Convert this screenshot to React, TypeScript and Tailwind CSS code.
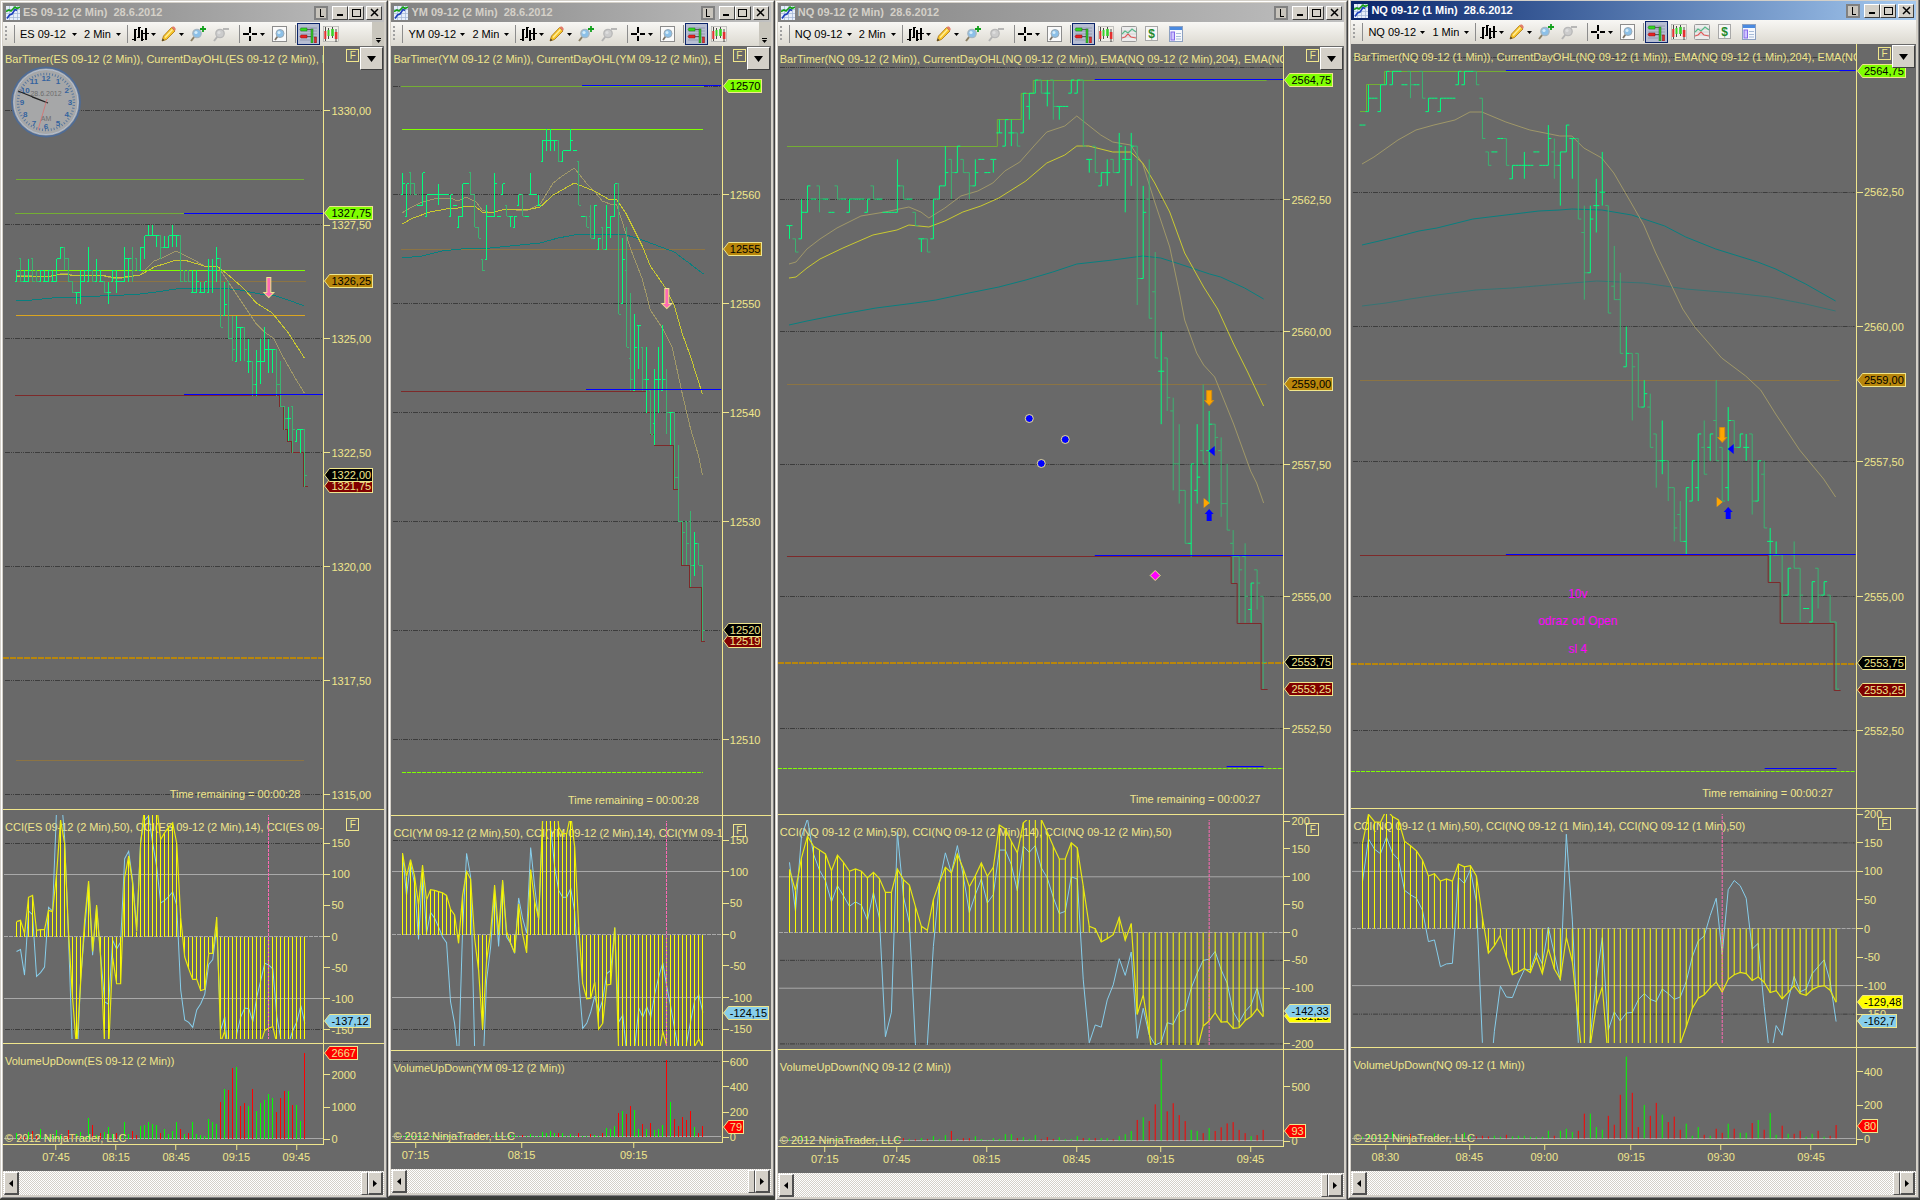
import type { ReactNode } from "react";

type Tag = { text: string; y: number; tone: keyof typeof TAG_TONES };
type Line = { pts: string; color: string; w?: number; dash?: string };
type Tick = [string, number];

type ChartProps = {
  symbol: string;
  period: string;
  active?: boolean;
  frame: string;
  axis: string;
  cciHeight: string;
  volHeight: string;
  extraTools?: boolean;
  x0: number;
  x1: number;
  top: number;
  sep1: number;
  sep2: number;
  sep3: number;
  firstBar: number;
  step: number;
  priceZero: number;
  priceStep: number;
  bars: string;
  grid: number[];
  lines: Line[];
  priceTicks: Tick[];
  priceTags: Tag[];
  remaining: string;
  remainingPad: string;
  cciZero: number;
  cciUnit: number;
  cci: number[];
  fast: number[];
  cciTicks: number[];
  cciGrid: number[];
  cciTags: Tag[];
  marker: number;
  fullCciTitle?: boolean;
  volZero: number;
  volUnit: number;
  vol: number[];
  volTicks: number[];
  volGrid?: number[];
  volTag: Tag;
  times: Tick[];
  drawings: ReactNode;
  overlay?: ReactNode;
};

const TAG_TONES = {
  lime: { fill: "#7fff00", box: "bg-[#7fff00] text-black" },
  gold: { fill: "#b8860b", box: "bg-[#b8860b] text-black" },
  black: { fill: "#000000", box: "bg-black text-[#f0e68c]" },
  maroon: { fill: "#800000", box: "bg-[#800000] text-[#f0e68c]" },
  sky: { fill: "#87ceeb", box: "bg-[#87ceeb] text-black" },
  yellow: { fill: "#ffff00", box: "bg-[#ffff00] text-black" },
  red: { fill: "#ff0000", box: "bg-[#ff0000] text-[#f0e68c]" },
};

const KHAKI = "#a09868";
const YELLOW = "#caca30";
const TEAL = "#087f7f";
const OLIVE = "#74ae34";
const LIME = "#7fff00";
const BLUE = "#0000ff";
const MAROON = "#7d2a2a";
const BROWN = "#8c7444";
const GOLD = "#b8860b";

// ---------- toolbar ----------

function Caret() {
  return (
    <svg width="5" height="3" viewBox="0 0 5 3" className="shrink-0">
      <path d="M0 0h5L2.5 3z" fill="#000" />
    </svg>
  );
}

function Divider() {
  return <span className="h-[18px] w-px shrink-0 bg-[#8c8c8c]" />;
}

function ToolButton({ label, wide, children }: { label: string; wide?: boolean; children: ReactNode }) {
  return (
    <button aria-label={label} className={wide ? "flex h-5 w-[21px] shrink-0 items-center gap-[2px]" : "flex h-5 w-4 shrink-0 items-center"}>
      {children}
    </button>
  );
}

function AppIcon() {
  return (
    <svg width="14" height="14" viewBox="0 0 14 14" className="shrink-0">
      <rect width="14" height="14" fill="#e6eefa" />
      <path d="M0 3.5h14M0 7.5h14M0 11.5h14M3.5 0v14M7.5 0v14M11.5 0v14" stroke="#9fb4d4" strokeWidth="0.7" />
      <path d="M0 5.500l3-1.500 2 1 4-4 2 1.500 3-1.500" fill="none" stroke="#15a015" strokeWidth="1.600" />
      <path d="M1 12.500l2.500-3.500 2.500-1 3-4.500 2 1" fill="none" stroke="#1c3fbc" strokeWidth="1.600" />
    </svg>
  );
}

function BarsIcon() {
  return (
    <svg width="17" height="16" viewBox="0 0 17 16" className="shrink-0" shapeRendering="crispEdges">
      <path d="M3 3v12M7 1v11M10 4v11M14 2v12" stroke="#000" strokeWidth="2" fill="none" />
      <path d="M0 13.500h3M3 3.500h2M5 11.500h2M7 1.500h2M10 13.500h2M11 7.500h6" stroke="#000" fill="none" />
    </svg>
  );
}

function PencilIcon() {
  return (
    <svg width="16" height="16" viewBox="0 0 16 16" className="shrink-0">
      <path d="M1 15l1.500-5 8-8.500 3.500 3.500-8.500 8.500z" fill="#f7c52b" stroke="#a87412" strokeWidth="0.8" />
      <path d="M4 11.500l7.500-8" stroke="#ffef9a" strokeWidth="1.400" />
      <path d="M10.500 1.500l1.500-1.200q1.800 0 2.800 2.800L14 5z" fill="#e37d6a" />
      <path d="M1 15l.8-2.500 1.600 1.700z" fill="#333" />
    </svg>
  );
}

function ZoomIcon({ out }: { out?: boolean }) {
  return (
    <svg width="16" height="16" viewBox="0 0 16 16" className="shrink-0">
      <path d="M4.500 10.500L1 15" stroke={out ? "#b4b4b4" : "#8c8064"} strokeWidth="2" />
      <circle cx="7" cy="7.500" r="4.200" fill={out ? "#cccccc" : "#8cc0e8"} stroke={out ? "#b8b8b8" : "#a6b6c2"} strokeWidth="1.300" />
      <circle cx="6" cy="6.500" r="1.600" fill={out ? "#dedede" : "#d4ecfa"} />
      {out ? <path d="M10 3h6" stroke="#b0b0b0" strokeWidth="1.800" /> : <path d="M10 3h6M13 0v6" stroke="#12a01c" strokeWidth="1.800" />}
    </svg>
  );
}

function CrossIcon() {
  return (
    <svg width="15" height="15" viewBox="0 0 15 15" className="shrink-0" shapeRendering="crispEdges">
      <path d="M0 7h6M9 7h5M7 0v6M7 9v5" stroke="#000" strokeWidth="2" />
    </svg>
  );
}

function PageZoomIcon() {
  return (
    <svg width="15" height="16" viewBox="0 0 15 16" className="shrink-0">
      <rect x="0.500" y="0.500" width="14" height="15" fill="#fafafa" stroke="#8c8c8c" />
      <path d="M5.500 10.500L3 14" stroke="#7c7468" strokeWidth="1.800" />
      <circle cx="8" cy="7.500" r="4" fill="#8cc0e8" stroke="#9aa9b4" />
      <circle cx="7" cy="6.500" r="1.500" fill="#d4ecfa" />
    </svg>
  );
}

function TraderIcon() {
  return (
    <svg width="19" height="17" viewBox="0 0 19 17">
      <path d="M1 2h17M1 5h17M1 8h17M1 11h17M1 14h10" stroke="#8a93a8" strokeWidth="0.800" />
      <path d="M2 2h6v3H2l-1-1.500z" fill="#33d81f" stroke="#1b7a14" strokeWidth="0.500" />
      <path d="M2 9h6v3H2l-1-1.500z" fill="#e62222" stroke="#8c1010" strokeWidth="0.500" />
      <path d="M8 3.500h5M8 10.500h4" stroke="#444" strokeWidth="0.800" />
      <rect x="12" y="3" width="2" height="14" fill="#35c828" stroke="#1c6c18" strokeWidth="0.500" />
      <rect x="15.500" y="11" width="2" height="6" fill="#e02d2d" stroke="#801616" strokeWidth="0.500" />
    </svg>
  );
}

function CandlesIcon() {
  return (
    <svg width="16" height="16" viewBox="0 0 16 16">
      <rect x="0.500" y="0.500" width="15" height="15" fill="#f1efe8" stroke="#a0a0a0" strokeWidth="0.600" />
      <path d="M2.500 1v14M5.500 2v11M9.500 1v11M13 3v13" stroke="#222" strokeWidth="0.800" />
      <rect x="1.300" y="5" width="2" height="8" fill="#e33030" />
      <rect x="4.500" y="4" width="2" height="6" fill="#36d22a" />
      <rect x="8.200" y="3" width="2.600" height="7" fill="#36d22a" />
      <rect x="11.800" y="6" width="2.600" height="7" fill="#e33030" />
    </svg>
  );
}

function IndicatorIcon() {
  return (
    <svg width="16" height="16" viewBox="0 0 16 16">
      <rect x="0.500" y="0.500" width="15" height="15" rx="1" fill="#ececec" stroke="#9a9a9a" />
      <path d="M1 5h14M1 8h14M1 11h14" stroke="#c8c8c8" strokeWidth="0.700" />
      <path d="M1 8l3-3 3 2 4-4 4 3" fill="none" stroke="#58b888" strokeWidth="1.200" />
      <path d="M1 12l3-1 3-3 3 3 5 1" fill="none" stroke="#e05a5a" strokeWidth="1.200" />
    </svg>
  );
}

function StrategyIcon() {
  return (
    <svg width="13" height="16" viewBox="0 0 13 16">
      <rect x="0.500" y="0.500" width="12" height="14" fill="#f6f6f6" stroke="#a8a8a8" />
      <text x="6.500" y="12" textAnchor="middle" className="font-['Liberation_Sans'] text-[12px] font-bold" fill="#1f8a2c">$</text>
    </svg>
  );
}

function PropertiesIcon() {
  return (
    <svg width="14" height="16" viewBox="0 0 14 16">
      <rect x="0.500" y="0.500" width="13" height="15" fill="#f6f8fc" stroke="#8ca0c0" />
      <path d="M1 2.500h12" stroke="#4a8ae0" strokeWidth="3" />
      <rect x="2" y="6" width="3.500" height="8" fill="#cfc4ff" stroke="#8468e8" />
      <path d="M7 7.500h5M7 10.500h5M7 13h5" stroke="#a8bcd8" />
    </svg>
  );
}

function TitleButton({ label, children, flat }: { label: string; children: ReactNode; flat?: boolean }) {
  return (
    <button
      aria-label={label}
      className={
        flat
          ? "flex h-[14px] w-[14px] items-center justify-center border-2 border-[#808080] bg-[#c8c4bc]"
          : "flex h-[14px] w-4 items-center justify-center border border-b-[#404040] border-l-white border-r-[#404040] border-t-white bg-[#d4d0c8]"
      }
    >
      <svg width="9" height="9" viewBox="0 0 9 9" shapeRendering={label === "Close" ? "auto" : "crispEdges"}>
        {children}
      </svg>
    </button>
  );
}

function TitleBar({ name, active }: { name: string; active?: boolean }) {
  return (
    <header
      className={
        active
          ? "flex h-[19px] items-center bg-linear-to-r from-[#0a246a] to-[#a6caf0] pl-[3px] pr-[2px] text-white"
          : "flex h-[19px] items-center bg-linear-to-r from-[#808080] to-[#c0c0c0] pl-[3px] pr-[2px] text-[#d4d0c8]"
      }
    >
      <AppIcon />
      <h2 className="ml-[3px] flex-1 overflow-hidden whitespace-pre pb-[2px] text-[11px] font-bold leading-4">{name}</h2>
      <TitleButton label="Link" flat>
        <path d="M3 1v7h4" stroke="#000" fill="none" />
      </TitleButton>
      <span className="w-1" />
      <TitleButton label="Minimize">
        <path d="M1 7h6" stroke="#000" strokeWidth="2" />
      </TitleButton>
      <TitleButton label="Maximize">
        <path d="M0.500 1.500h8v7h-8zM0 1h9" stroke="#000" fill="none" />
      </TitleButton>
      <span className="w-[2px]" />
      <TitleButton label="Close">
        <path d="M1 1l7 7M8 1L1 8" stroke="#000" strokeWidth="1.500" />
      </TitleButton>
    </header>
  );
}

function Toolbar({ symbol, period, extra }: { symbol: string; period: string; extra?: boolean }) {
  return (
    <div className="flex h-6 items-center overflow-hidden bg-linear-to-b from-[#f8f7f4] to-[#dcd9d0] pl-[2px] text-[11px] text-black">
      <span className="h-4 w-[2px] shrink-0 bg-[repeating-linear-gradient(to_bottom,#a0a0a0_0_2px,transparent_2px_4px)]" />
      <span className="w-[7px] shrink-0" />
      <Divider />
      <label className="ml-[5px] flex w-[57px] shrink-0 items-center justify-between">
        <select aria-label="Instrument" className="h-5 appearance-none bg-transparent">
          <option>{symbol} 09-12</option>
        </select>
        <Caret />
      </label>
      <label className="ml-[7px] flex w-[37px] shrink-0 items-center justify-between">
        <select aria-label="Period" className="h-5 appearance-none bg-transparent">
          <option>{period}</option>
        </select>
        <Caret />
      </label>
      <span className="w-[6px] shrink-0" />
      <Divider />
      <span className="w-[4px] shrink-0" />
      <ToolButton label="Chart style" wide>
        <BarsIcon />
        <Caret />
      </ToolButton>
      <span className="w-[8px] shrink-0" />
      <ToolButton label="Drawing tools" wide>
        <PencilIcon />
        <Caret />
      </ToolButton>
      <span className="w-[8px] shrink-0" />
      <ToolButton label="Zoom in">
        <ZoomIcon />
      </ToolButton>
      <span className="w-[7px] shrink-0" />
      <ToolButton label="Zoom out">
        <ZoomIcon out />
      </ToolButton>
      <span className="w-[10px] shrink-0" />
      <Divider />
      <span className="w-[3px] shrink-0" />
      <ToolButton label="Cursor" wide>
        <CrossIcon />
        <Caret />
      </ToolButton>
      <span className="w-[8px] shrink-0" />
      <ToolButton label="Data box">
        <PageZoomIcon />
      </ToolButton>
      <span className="w-[7px] shrink-0" />
      <Divider />
      <button aria-label="Chart trader" className="ml-px flex h-[22px] w-[23px] shrink-0 items-center justify-center border border-[#0a246a] bg-[#b6bdd2]">
        <TraderIcon />
      </button>
      <span className="w-[3px] shrink-0" />
      <ToolButton label="Data series">
        <CandlesIcon />
      </ToolButton>
      {extra && (
        <div className="ml-[7px] flex shrink-0 gap-[8px]">
          <ToolButton label="Indicators">
            <IndicatorIcon />
          </ToolButton>
          <ToolButton label="Strategies">
            <StrategyIcon />
          </ToolButton>
          <ToolButton label="Properties">
            <PropertiesIcon />
          </ToolButton>
        </div>
      )}
      {!extra && (
        <button aria-label="More tools" className="ml-auto flex h-6 w-3 flex-col items-center justify-end gap-px bg-[#c9c6bd] pb-[3px]">
          <span className="h-px w-[5px] bg-black" />
          <Caret />
        </button>
      )}
    </div>
  );
}

// ---------- axis pieces ----------

function PriceTag({ tag, top }: { tag: Tag; top: string }) {
  const tone = TAG_TONES[tag.tone];
  return (
    <div className="absolute left-0 flex -translate-y-1/2" style={{ top }}>
      <svg width="7" height="14" viewBox="0 0 7 14">
        <path d="M7 0.500H5.500L0.500 7l5 6.500H7" fill={tone.fill} stroke="#f0e68c" />
      </svg>
      <span className={`h-[14px] border-y border-r border-[#f0e68c] pr-px text-[11px] leading-[13px] ${tone.box}`}>{tag.text}</span>
    </div>
  );
}

function Axis({ width, from, to, ticks, tags, open, children }: { width: string; from: number; to: number; ticks: Tick[]; tags: Tag[]; open?: boolean; children?: ReactNode }) {
  const pct = (y: number) => `${((y - from) / (to - from)) * 100}%`;
  return (
    <div className={`relative shrink-0 border-l border-[#f0e68c] ${width} ${open ? "" : "border-b"}`}>
      {ticks.map(([text, y]) => (
        <div key={text} className="absolute left-0 flex -translate-y-1/2 items-center gap-px" style={{ top: pct(y) }}>
          <span className="h-px w-[6px] bg-[#f0e68c]" />
          <span className="h-[14px] leading-[15px]">{text}</span>
        </div>
      ))}
      {tags.map((t) => (
        <PriceTag key={t.text} tag={t} top={pct(t.y)} />
      ))}
      {children}
    </div>
  );
}

function FixedButton({ className }: { className: string }) {
  return (
    <button aria-label="Fixed scale" className={`absolute right-[25px] h-[13px] w-[13px] border border-[#f0e68c] text-center text-[10px] leading-[12px] ${className}`}>
      F
    </button>
  );
}

// ---------- plots ----------

function Grid({ ys, x0, x1 }: { ys: number[]; x0: number; x1: number }) {
  return (
    <>
      {ys.map((y) => (
        <path key={y} d={`M${x0 + 2} ${y}H${x1 - 1}`} stroke="#3c3c3c" strokeDasharray="5 1 1 1 1 1" />
      ))}
    </>
  );
}

function PriceBars({ bars, firstBar, step, zero, unit }: { bars: string; firstBar: number; step: number; zero: number; unit: number }) {
  const arm = step / 2;
  const y = (v: number) => zero - v * unit;
  return (
    <>
      {bars.trim().split(/\s+/).map((bar, i) => {
        const n = bar.split("/").map(Number);
        const [h, l, o, c] = n.length === 1 ? [n[0], n[0], n[0], n[0]] : n;
        const x = firstBar + i * step;
        return (
          <path
            key={i}
            d={`M${x - arm} ${y(o)}H${x}M${x} ${y(h)}V${y(l)}M${x} ${y(c)}H${x + arm}`}
            stroke={c < o ? "#3cb371" : "#00ff7f"}
          />
        );
      })}
    </>
  );
}

function DownArrow({ x, y, h, pink }: { x: number; y: number; h: number; pink?: boolean }) {
  const half = pink ? 2 : 2.5;
  const wing = pink ? 3 : 2;
  const d = `M${x - half} ${y}h${half * 2}v${h - 5}h${wing}l${-half - wing} 5l${-half - wing} -5h${wing}z`;
  return <path d={d} fill={pink ? "#ff69b4" : "#ffa500"} stroke={pink ? "#f0e68c" : "#d08c10"} shapeRendering="auto" />;
}

function UpArrow({ x, y }: { x: number; y: number }) {
  return <path d={`M${x} ${y}l4.500 5h-2v7h-5v-7h-2z`} fill="#0000ff" shapeRendering="auto" />;
}

function Clock() {
  const hours = [12, 1, 2, 3, 4, 5, 6, 7, 8, 9, 10, 11];
  return (
    <svg width="70" height="72" viewBox="-35 -36 70 72" className="absolute left-2 top-[20px]">
      <ellipse rx="34" ry="34.500" fill="#a6a7a8" stroke="#4f6c96" strokeWidth="1.800" />
      <ellipse rx="32" ry="32.500" fill="none" stroke="#b4c0d2" strokeWidth="1" />
      <circle r="28" fill="none" stroke="#5a789e" strokeWidth="2.500" strokeDasharray="1 1.932" />
      {hours.map((h, i) => (
        <text
          key={h}
          x={Math.sin((i * Math.PI) / 6) * 24}
          y={-Math.cos((i * Math.PI) / 6) * 24 + 3}
          textAnchor="middle"
          fill="#33639f"
          className="text-[8px] font-bold"
        >
          {h}
        </text>
      ))}
      <text y="-6" textAnchor="middle" fill="#6d6d6d" className="text-[7px]">28.6.2012</text>
      <text y="19" textAnchor="middle" fill="#6d6d6d" className="text-[7px]">AM</text>
      <path d="M2 1L-28 -11M2 1L-14 -5" stroke="#222" strokeWidth="1.300" />
      <path d="M1 -3L-8 28" stroke="#d87070" strokeWidth="0.800" />
    </svg>
  );
}

function ScrollArrow({ dir }: { dir: "left" | "right" }) {
  return (
    <button
      aria-label={`Scroll ${dir}`}
      className="flex h-[23px] w-[15px] shrink-0 items-center justify-center border border-b-2 border-r-2 border-b-[#505050] border-l-white border-r-[#505050] border-t-white bg-[#d4d0c8]"
    >
      <svg width="4" height="7" viewBox="0 0 4 7">
        <path d={dir === "left" ? "M4 0v7L0 3.500z" : "M0 0v7l4-3.500z"} fill="#000" />
      </svg>
    </button>
  );
}

function ChartWindow(p: ChartProps) {
  const width = p.x1 - p.x0;
  const inst = `${p.symbol} 09-12 (${p.period})`;
  const bx = (i: number) => p.firstBar + i * p.step;
  const cy = (v: number) => p.cciZero - v * p.cciUnit;
  const vy = (v: number) => p.volZero - Math.abs(v) * p.volUnit;
  const series = (vals: number[]) => vals.map((v, i) => `${bx(i)},${cy(v)}`).join(" ");
  const clipId = `cci-${p.x0}`;

  return (
    <section className={`flex min-w-0 flex-col border border-b-[#404040] border-l-[#d4d0c8] border-r-[#404040] border-t-[#d4d0c8] bg-[#d4d0c8] ${p.frame}`}>
      <div className="flex flex-1 flex-col border border-b-[#808080] border-l-white border-r-[#808080] border-t-white pb-[2px] pl-px pr-[2px] pt-px">
        <TitleBar name={`${inst}  28.6.2012`} active={p.active} />
        <Toolbar symbol={p.symbol} period={p.period} extra={p.extraTools} />
        <div className="flex flex-1 flex-col bg-[#696969] text-[11px] text-[#f0e68c]">
          <div className="flex min-h-[400px] flex-1">
            <div className="relative flex min-w-0 flex-1 border-b border-[#f0e68c]">
              <svg
                className="absolute inset-0 h-full w-full"
                viewBox={`${p.x0} ${p.top} ${width} ${p.sep1 - p.top}`}
                preserveAspectRatio="none"
                fill="none"
                shapeRendering="crispEdges"
              >
                <Grid ys={p.grid} x0={p.x0} x1={p.x1} />
                {p.lines.filter((l) => l.color !== BLUE).map((l) => (
                  <polyline key={l.pts} points={l.pts} stroke={l.color} strokeWidth={l.w ?? 1} strokeDasharray={l.dash} />
                ))}
                <PriceBars bars={p.bars} firstBar={p.firstBar} step={p.step} zero={p.priceZero} unit={p.priceStep} />
                {p.lines.filter((l) => l.color === BLUE).map((l) => (
                  <polyline key={l.pts} points={l.pts} stroke={l.color} strokeWidth={l.w ?? 1} />
                ))}
                {p.drawings}
              </svg>
              <p className="absolute left-[2px] right-0 top-[6px] overflow-hidden whitespace-nowrap leading-[14px]">
                {`BarTimer(${inst}), CurrentDayOHL(${inst}), EMA(${inst},204), EMA(${p.symbol}`}
              </p>
              {p.overlay}
              <p className={`absolute right-0 whitespace-nowrap leading-[14px] bottom-[8px] ${p.remainingPad}`}>Time remaining = {p.remaining}</p>
            </div>
            <Axis width={p.axis} from={p.top} to={p.sep1} ticks={p.priceTicks} tags={p.priceTags}>
              <FixedButton className="top-[3px]" />
              <button
                aria-label="Chart menu"
                className="absolute right-px top-px flex h-[23px] w-[23px] items-center justify-center border border-b-[#404040] border-l-white border-r-[#404040] border-t-white bg-[#d4d0c8]"
              >
                <svg width="9" height="6" viewBox="0 0 9 6">
                  <path d="M0 0h9L4.500 6z" fill="#000" />
                </svg>
              </button>
            </Axis>
          </div>

          <div className={`flex ${p.cciHeight}`}>
            <div className="relative min-w-0 flex-1 border-b border-[#f0e68c]">
              <p className="absolute left-[2px] right-0 top-[10px] overflow-hidden whitespace-nowrap leading-[14px]">
                {`CCI(${inst},50), CCI(${inst},14), CCI(${p.fullCciTitle ? `${inst},50)` : `${p.symbol} 09-12`}`}
              </p>
              <svg
                className="absolute inset-0 h-full w-full"
                viewBox={`${p.x0} ${p.sep1 + 1} ${width} ${p.sep2 - p.sep1 - 1}`}
                preserveAspectRatio="none"
                fill="none"
              >
                <clipPath id={clipId}>
                  <rect x={p.x0} y={p.sep1 + 6} width={width} height={p.sep2 - p.sep1 - 10} />
                </clipPath>
                <g shapeRendering="crispEdges">
                  <Grid ys={p.cciGrid.map(cy)} x0={p.x0} x1={p.x1} />
                  <path d={`M${p.x0 + 1} ${cy(100)}H${p.x1}M${p.x0 + 1} ${cy(-100)}H${p.x1}`} stroke="#a9a9a9" />
                  <path d={`M${p.x0 + 1} ${cy(0)}H${p.x1}`} stroke="#a9a9a9" strokeDasharray="4 1" />
                </g>
                <g clipPath={`url(#${clipId})`}>
                  <polyline points={series(p.fast)} stroke="#87ceeb" strokeWidth="1" />
                  <path d={p.cci.map((v, i) => `M${bx(i)} ${cy(0)}V${cy(v)}`).join("")} stroke="#ffff00" shapeRendering="crispEdges" />
                  <polyline points={series(p.cci)} stroke="#e8e810" strokeWidth="1.200" />
                  <path d={`M${p.marker} ${p.sep1}V${p.sep2}`} stroke="#ff69b4" strokeDasharray="3 1" shapeRendering="crispEdges" />
                </g>
              </svg>
            </div>
            <Axis width={p.axis} from={p.sep1 + 1} to={p.sep2} ticks={p.cciTicks.map((v): Tick => [String(v), cy(v)])} tags={p.cciTags}>
              <FixedButton className="top-[8px]" />
            </Axis>
          </div>

          <div className={`flex ${p.volHeight}`}>
            <div className="relative min-w-0 flex-1 border-b border-[#f0e68c]">
              <p className="absolute left-[2px] top-[10px] leading-[14px]">VolumeUpDown({inst})</p>
              <svg
                className="absolute inset-0 h-full w-full"
                viewBox={`${p.x0} ${p.sep2 + 1} ${width} ${p.sep3 - p.sep2 - 1}`}
                preserveAspectRatio="none"
                fill="none"
                shapeRendering="crispEdges"
              >
                <Grid ys={(p.volGrid ?? []).map(vy)} x0={p.x0} x1={p.x1} />
                <path d={`M${p.x0 + 1} ${p.volZero}H${p.x1}`} stroke="#a9a9a9" />
                {p.vol.map((v, i) => (
                  <path key={i} d={`M${bx(i)} ${p.volZero}V${vy(v)}`} stroke={v < 0 ? "#ff0000" : "#00ff00"} />
                ))}
              </svg>
              <p className="absolute bottom-0 left-[2px] leading-[11px]">© 2012 NinjaTrader, LLC</p>
            </div>
            <Axis width={p.axis} from={p.sep2 + 1} to={p.sep3} ticks={p.volTicks.map((v): Tick => [String(v), vy(v)])} tags={[p.volTag]} open />
          </div>

          <div className="flex h-[26px]">
            <div className="relative flex-1">
              {p.times.map(([text, x]) => (
                <div key={text} className="absolute top-0 flex -translate-x-1/2 flex-col items-center" style={{ left: `${((x - p.x0) / width) * 100}%` }}>
                  <span className="h-[5px] w-px bg-[#f0e68c]" />
                  <span className="leading-[15px]">{text}</span>
                </div>
              ))}
            </div>
            <div className={p.axis} />
          </div>
        </div>

        <div className="flex h-6 items-start bg-[repeating-conic-gradient(#ffffff_0_25%,#d4d0c8_0_50%)] bg-size-[2px_2px] px-px pt-px">
          <ScrollArrow dir="left" />
          <span className="flex-1" />
          <span className="h-[23px] w-[7px] border border-b-[#505050] border-l-white border-r-[#505050] border-t-white bg-[#d4d0c8]" />
          <ScrollArrow dir="right" />
        </div>
      </div>
    </section>
  );
}

// ---------- data ----------
// bars are high/low/open/close in ticks from a round price, a lone number is a flat bar

const ES_BARS = `6/5/5/6 7/5/7/5 6/5/5/5 7/5/5/6 7/5/7/5 6/5/6/5 6/5/5/6 6/5/5/5 6/5/5/6 6/5/5/5 7/5/5/7 8/7/7/8 8/6/8/7
7/5/7/5 5/4/5/4 4/3/4/4 6/3/4/5 6/5/5/6 8/5/5/6 6/5/6/5 7/5/5/6 6/5/5/5 5/4/5/4 5/3/4/4 6/5/5/6 6/4/5/5 5 8/5/5/7 7/5/7/7
8/5/7/6 7/6/7/6 8/6/6/8 9/7/8/9 10/9/9/9 10/9/9/9 9/8/9/9 9/7/9/8 9/8/8/8 9/8/8/9 10/8/9/9 9/8/9/9 9/5/9/5 6/5/6/5 6/5/6/5
6/4/4/4 6/4/4/5 5/4/4/4 5/4/4/5 7/4/4/6 7/4/6/6 8/5/6/7 7/1/7/1 5/2/2/3 5/0/5/0 2/-2/0/-1 2/-2/-2/1 1/-2/1/1 1/-2/1/-1
0/-3/-2/-2 -2/-5/-2/-4 -1/-5/-4/-2 0/-4/-2/-2 1/-2/-2/-1 0/-3/-1/-1 -1/-3/-1/-1 -1/-5/-1/-4 -2/-6/-4/-6 -6/-8/-6/-7
-6/-9/-7/-7 -6/-10/-6/-8 -8/-9/-9/-8 -8/-10/-8/-8 -8/-13/-8/-12`;

const YM_BARS = `2/0/0/1 1/-2/-2/1 2/0/2/1 1/0/1/0 -1 2/-1/-1/2 0/-2/-2/0 0 0 1/-1/0/0 0 0 0/-2/-2/0 -1 -2/-3/-3/-2 1/-2/-2/1 1
2/0/2/0 0/-3/0/-3 -3/-4/-3/-4 -6/-7/-6/-7 -1/-6/-6/-2 -2 2/-2/-2/1 -2 1/0/0/1 -1/-2/-1/-2 -2/-3/-2/-2 -2/-3/-3/-2 0/-1/-1/0
0/-2/0/-2 -2 2/0/0/0 0 0/-1/-1/-1 5/3/3/5 6/4/5/5 6/4/5/5 5/4/5/5 5/3/5/3 4/3/3/4 4 6/4/4/5 4 3/-1/3/-1 -2 -2/-3/-2/-3
-1/-4/-2/-4 -1/-4/-4/-1 -4/-5/-5/-4 -3/-5/-3/-5 -1/-5/-5/-3 -2/-4/-3/-2 1/-2/-2/1 1/-11/1/-11 -4/-10/-10/-6 -3/-14/-7/-14
-9/-18/-15/-17 -11/-18/-18/-14 -12/-16/-12/-12 -14/-18/-14/-17 -14/-20/-17/-17 -18/-22/-18/-22 -16/-23/-21/-17
-14/-20/-17/-17 -12/-18/-18/-17 -16/-22/-17/-20 -20/-23/-20/-20 -20/-27/-20/-26 -23/-30/-26/-30 -30/-34/-30/-31
-30/-34/-30/-32 -29/-36/-30/-34 -31/-35/-34/-32 -32/-34/-32/-34 -34/-41/-34/-40`;

const NQ2_BARS = `8/7/8/8 7/6/7/6 10/7/7/9 11/9/9/11 10 11/9/11/10 10 9 11/10/11/10 10 10/9/9/10 10 10 10/9/9/10 11/10/11/10 10 9 9
13/9/9/11 11/10/11/10 10 9/8/9/8 7/6/7/7 7/6/7/6 10/7/7/10 11/10/10/11 14/11/11/12 13/10/13/12 14/12/12/14 13/12/13/12
12/10/12/11 13/11/11/12 13 12 13/12/13/13 16/15/15/15 16/14/14/16 16/14/15/15 15/14/15/14 18/15/15/18 18/16/17/18
19/18/18/19 19/18/19/18 19/17/18/18 19/16/19/17 17/16/17/17 17 19/18/18/19 19/18/18/19 19/14/19/14 13/12/13/13 14/12/14/12
12/11/11/12 13/11/12/12 13/12/13/12 15/12/12/14 14/9/13/13 15/11/13/14 14/2/14/4 11/4/4/9 13/1/10/1 6/-2/3/-2 0/-7/-3/-3
-2/-6/-2/-5 -5/-12/-6/-10 -7/-13/-10/-12 -12/-16/-12/-16 -10/-17/-16/-10 -7/-13/-12/-11 -4/-10/-9/-10 -6/-13/-9/-7
-7/-9/-7/-8 -8/-14/-9/-13 -10/-15/-13/-15 -15/-19/-16/-17 -17/-22/-17/-18 -16/-22/-17/-20 -19/-22/-21/-19 -18/-21/-18/-19
-20/-27/-20/-25`;

const NQ1_BARS = `15 18/16/16/17 17 18/16/16/18 19/18/18/19 19/18/18/19 19 18 19/17/19/18 18 19/17/19/17 17/16/16/17 17 17/16/16/17
17 17 19/18/18/19 19/18/18/19 19 19/18/19/18 17/14/17/14 13/12/13/12 13 14 14/12/14/12 12/11/11/12 12 13/11/12/12 12 13 12
15/12/12/14 14/11/13/12 13/9/12/13 15/13/13/15 14/11/14/14 14/8/14/8 9/2/7/4 9/4/4/8 11/7/9/9 13/9/10/10 9/1/9/1 6/2/3/2
4/-2/2/-2 0/-3/-3/-2 -2/-7/-2/-3 -2/-6/-2/-6 -4/-6/-6/-5 -5/-9/-6/-9 -8/-12/-8/-10 -7/-11/-10/-10 -10/-13/-10/-12
-12/-16/-12/-15 -13/-16/-14/-16 -12/-17/-16/-12 -10/-13/-13/-10 -8/-13/-12/-8 -7/-11/-9/-11 -8/-10/-9/-8 -4/-10/-7/-10
-9/-13/-9/-13 -6/-13/-12/-7 -7/-9/-7/-9 -8/-9/-9/-8 -8/-10/-9/-9 -8/-14/-8/-13 -10/-13/-13/-10 -10/-15/-11/-15
-15/-19/-16/-16 -16/-17/-17/-17 -17/-22/-17/-20 -18/-20/-20/-18 -16/-18/-17/-18 -18/-22/-18/-20 -21 -19/-22/-22/-19
-18/-21/-18/-20 -19/-20/-20/-19 -20/-22/-20/-22 -22/-27/-22/-27`;

const ES_CCI = [24, 26, 5, 63, 66, 10, 11, 11, 42, 40, 100, 187, 150, 5, -100, -180, -75, 25, 89, -24, 50, -33, -175, -180, -34, -76, -76, 95, 129, 85, 8, 150, 210, 230, 230, 210, 156, 167, 176, 183, 150, 30, -33, -52, -69, -69, -87, -85, -27, -27, 31, -170, -152, -200, -220, -220, -220, -220, -220, -220, -210, -170, -151, -147, -145, -172, -220, -220, -220, -220, -220, -220, -220];
const ES_FAST = [-24, -21, -62, 41, 35, -64, -58, -49, 47, 41, 205, 240, 160, -5, -190, -220, -70, 10, 85, -30, 48, -30, -105, -109, -6, -20, -9, 125, 137, 90, 15, 155, 187, 194, 150, 112, 54, 58, 64, 72, 50, -86, -134, -138, -146, -118, -108, -93, -45, -37, 15, -150, -129, -200, -220, -156, -129, -115, -116, -137, -97, -70, -43, -46, -52, -129, -165, -200, -170, -151, -137, -111, -140];
const ES_VOL = [180, -80, -60, 210, -240, -70, 300, 60, 40, 100, 280, 120, -80, -270, -130, 150, 210, 60, 640, -430, 100, -180, 210, 360, 150, -180, 80, 520, 130, -240, -110, 400, 420, 520, 460, 430, -180, 300, 140, 240, 520, -300, 140, -180, 520, 150, 110, 80, 610, 520, 460, -1150, 1550, -1530, -2210, 2240, -1030, -1120, 1020, -1550, 860, 1120, 1210, 1400, 1270, -830, -1270, -1490, 1490, -1050, 1050, 550, -2667];

const YM_CCI = [129, 92, 119, 93, 47, 110, 55, 71, 70, 68, 66, 62, 40, 31, -14, 62, 100, 88, -6, -57, -151, -41, 3, 78, 2, 86, 4, -14, -29, 48, 0, -29, 103, 52, 25, 187, 250, 270, 250, 170, 160, 160, 190, 139, 12, -78, -102, -101, -75, -150, -141, -80, -79, 11, -190, -220, -220, -220, -220, -220, -220, -220, -220, -220, -190, -154, -178, -220, -220, -220, -220, -220, -220, -177, -166, -180];
const YM_FAST = [129, 62, 113, 81, -8, 100, 2, 35, 26, 12, -4, -13, -107, -141, -200, 7, 129, 92, -180, -230, -230, -72, -20, 70, -19, 84, -4, -14, -30, 58, 25, 2, 138, 76, 23, 179, 250, 170, 107, 70, 59, 59, 73, 36, -72, -149, -141, -123, -98, -123, -104, -62, -57, 11, -139, -128, -190, -230, -178, -117, -131, -115, -131, -94, -67, -45, -83, -115, -152, -185, -210, -170, -136, -104, -96, -124];
const YM_VOL = [5, 10, 4, 5, 8, 6, 4, 4, 6, 3, 5, 4, 8, 4, 3, 5, 4, 6, -28, 6, 8, 5, -4, 4, 12, 5, 3, 12, 10, 4, -14, 4, 22, 3, 3, 36, 30, 44, 30, -28, 30, 3, 20, 3, -28, 3, 4, -22, 10, 3, -28, 68, 60, 85, -190, 205, -180, -245, 212, 60, -100, 60, -108, 52, 60, 92, -612, 277, -140, -85, -157, -132, -205, 75, -30, -85];

const NQ2_CCI = [113, 75, 134, 173, 155, 148, 141, 111, 139, 126, 110, 114, 110, 98, 108, 97, 72, 72, 114, 95, 85, 47, 11, 4, 59, 90, 117, 107, 141, 114, 82, 102, 125, 101, 117, 193, 186, 164, 143, 197, 206, 215, 203, 180, 155, 132, 132, 161, 152, 83, 11, 7, -17, -11, -4, 27, -14, 16, -147, -112, -180, -260, -260, -260, -260, -260, -240, -230, -210, -168, -159, -144, -161, -160, -172, -171, -158, -151, -137, -151];
const NQ2_FAST = [126, 38, 172, 204, 141, 112, 93, 55, 84, 66, 47, 55, 49, 22, 72, 26, -187, -143, 180, 65, 17, -200, -260, -200, -25, 89, 143, 107, 156, 101, 36, 68, 96, 53, 68, 148, 148, 122, 75, 155, 144, 156, 116, 98, 63, 34, 38, 100, 96, -85, -198, -166, -170, -121, -94, -47, -77, -35, -190, -136, -184, -202, -197, -162, -165, -143, -138, -100, -73, -50, -48, -34, -67, -91, -142, -161, -142, -130, -99, -142];
const NQ2_VOL = [18, 8, 50, 15, 6, -8, 10, 5, 20, -10, 16, 8, 6, 14, -12, 6, 10, -8, 20, -22, 12, -12, 22, -14, 40, 12, 50, -88, 14, -22, -22, 40, 14, 4, 22, 14, 58, 58, -22, 32, 12, 50, -12, -32, -14, 30, 12, 12, 40, -22, 22, -22, 22, 22, -12, 40, 58, 88, -190, 215, -180, -335, 752, -270, -345, -235, -180, 98, 88, -68, 115, -88, -122, -158, -170, -98, -68, 40, -50, -98];

const NQ1_CCI = [149, 200, 187, 186, 208, 196, 190, 153, 145, 136, 120, 92, 96, 83, 87, 83, 113, 108, 110, 92, 20, -43, -30, -12, -50, -81, -76, -70, -77, -50, -79, -35, -71, -89, -15, -58, -160, -260, -205, -135, -102, -230, -260, -260, -260, -260, -260, -260, -260, -260, -260, -250, -230, -202, -172, -140, -122, -116, -104, -94, -111, -89, -81, -77, -79, -91, -85, -94, -112, -109, -123, -112, -100, -114, -117, -107, -102, -100, -108, -129];
const NQ1_FAST = [82, 157, 139, 131, 160, 132, 121, 67, 59, 53, 32, -23, -20, -67, -62, -61, 89, 79, 103, 47, -200, -300, -180, -101, -120, -121, -94, -72, -72, -41, -62, 2, -44, -91, 165, 15, -200, -300, -190, -90, -16, -178, -146, -162, -148, -147, -125, -114, -124, -128, -106, -114, -124, -120, -93, -50, -22, -13, 23, 53, -45, 68, 84, 75, 53, -36, -26, -137, -230, -170, -187, -125, -84, -111, -106, -79, -67, -55, -93, -163];
const NQ1_VOL = [10, 22, 12, 16, 22, 40, 16, 8, -28, 6, 10, -4, 30, 8, -6, 6, 8, 35, 12, -12, -16, -12, 16, 10, -22, 12, 16, 16, 10, 10, 10, 46, -16, 46, 58, 38, -46, -148, 148, 68, 52, -135, -82, -260, 487, -272, -68, 200, -135, -212, 142, -98, -130, -52, 88, 16, 68, -22, 16, -58, -34, 88, -58, 34, 34, -92, 110, -52, 152, 22, -76, 28, -28, -46, 10, 28, -46, 10, -16, -80];

export default function App() {
  return (
    <main className="flex min-h-screen overflow-hidden bg-[#3a3d38] font-['Liberation_Sans',Arial,sans-serif]">
      <ChartWindow
        symbol="ES" period="2 Min" frame="mb-px flex-[388]" axis="w-[61px]" cciHeight="h-[234px]" volHeight="h-[101px]"
        x0={3} x1={323} top={46} sep1={809} sep2={1043} sep3={1144}
        firstBar={16.5} step={4} priceZero={338.5} priceStep={11.4} bars={ES_BARS}
        grid={[110.5, 224.5, 338.5, 452.5, 566.5, 680.5, 794.5]}
        lines={[
          { pts: "16,179.5 304,179.5", color: OLIVE },
          { pts: "15,213.5 184,213.5", color: OLIVE },
          { pts: "16,281.5 306,281.5", color: BROWN },
          { pts: "16,315.5 305,315.5", color: "#daa520" },
          { pts: "3,658 323,658", color: GOLD, w: 2, dash: "6 1" },
          { pts: "16,760.5 304,760.5", color: BROWN },
          { pts: "15,395.5 279.5,395.5 279.5,406.5 283.5,406.5 283.5,429.5 287.5,429.5 287.5,441.5 291.5,441.5 291.5,452.5 303.5,452.5 303.5,486.5 308,486.5", color: MAROON },
          { pts: "16,301 32,300 52,298 80,297 100,296 124,295 140,294 156,292 176,289 192,288 220,288 240,290 260,294 276,296 288,300 304,306", color: TEAL },
          { pts: "16,275 32,276 48,277 64,273 76,276 100,275 116,279 140,275 154,261 164,257 176,251 192,259 204,266 218,267 228,282 244,306 256,324 264,332 273,338 280,352 296,380 304,393", color: KHAKI },
          { pts: "16,277 28,276 44,277 64,274 76,276 100,275 116,278 140,275 154,267 176,260 184,260 204,266 218,267 228,275 244,289 256,303 272,313 288,333 304,358", color: YELLOW },
          { pts: "16,270.5 305,270.5", color: LIME },
          { pts: "184,213.5 323,213.5", color: BLUE },
          { pts: "184,394.5 323,394.5", color: BLUE },
        ]}
        priceTicks={[["1330,00", 110.5], ["1327,50", 225], ["1325,00", 338.5], ["1322,50", 452.5], ["1320,00", 566.5], ["1317,50", 680.5], ["1315,00", 794.5]]}
        priceTags={[
          { text: "1327,75", y: 213, tone: "lime" },
          { text: "1326,25", y: 281, tone: "gold" },
          { text: "1321,75", y: 486, tone: "maroon" },
          { text: "1322,00", y: 475, tone: "black" },
        ]}
        remaining="00:00:28" remainingPad="pr-[23px]"
        cciZero={936.5} cciUnit={0.622} cci={ES_CCI} fast={ES_FAST}
        cciTicks={[150, 100, 50, 0, -50, -100, -150]} cciGrid={[150, -150]}
        cciTags={[{ text: "-137,12", y: 1021, tone: "sky" }]} marker={268.5}
        volZero={1138.5} volUnit={0.032} vol={ES_VOL} volTicks={[2000, 1000, 0]}
        volTag={{ text: "2667", y: 1053, tone: "red" }}
        times={[["07:45", 56], ["08:15", 116], ["08:45", 176], ["09:15", 236], ["09:45", 296]]}
        drawings={<DownArrow x={268.5} y={277.5} h={20} pink />}
        overlay={<Clock />}
      />
      <ChartWindow
        symbol="YM" period="2 Min" frame="mb-[3px] flex-[386]" axis="w-[49px]" cciHeight="h-[235px]" volHeight="h-[92px]"
        x0={391} x1={721} top={46} sep1={815} sep2={1050} sep3={1142}
        firstBar={402.5} step={4} priceZero={194.5} priceStep={10.9} bars={YM_BARS}
        grid={[86.5, 194.5, 303.5, 412.5, 521.5, 630.5, 739.5]}
        lines={[
          { pts: "401,86.5 704,86.5", color: OLIVE },
          { pts: "402,129.5 703,129.5", color: LIME },
          { pts: "401,249.5 705,249.5", color: BROWN },
          { pts: "402,772.5 703,772.5", color: LIME, dash: "4 1" },
          { pts: "401,391.5 646.5,391.5 646.5,412.5 650.5,412.5 650.5,434.5 654.5,434.5 654.5,445.5 673.5,445.5 673.5,489.5 678.5,489.5 678.5,521.5 681.5,521.5 681.5,565.5 689.5,565.5 689.5,587.5 701.5,587.5 701.5,641.5 705,641.5", color: MAROON },
          { pts: "402,258 422,256 442,251 470,248 490,248 510,246 540,243 558,238 574,235 614,234 626,235 642,240 674,252 690,264 703,274", color: TEAL },
          { pts: "402,213 410,208 422,202 434,199 450,198 458,201 466,197 476,202 482,210 490,213 506,209 526,211 540,204 553,183 562,176 574,168 586,183 594,191 602,201 610,204 616,204 622,222 630,248 642,279 650,310 662,328 672,348 682,394 690,428 698,455 702,475", color: KHAKI },
          { pts: "402,224 413,218 430,212 446,209 458,208 468,206 476,207 482,212 490,213 506,209 526,210 540,207 553,195 574,183 594,191 608,199 616,199 626,214 642,246 650,266 666,289 674,306 682,334 690,356 702,394", color: YELLOW },
          { pts: "582,85.5 721,85.5", color: BLUE },
          { pts: "586,389.5 721,389.5", color: BLUE },
        ]}
        priceTicks={[["12560", 194.5], ["12550", 303.5], ["12540", 412.5], ["12530", 521.5], ["12510", 739.5]]}
        priceTags={[
          { text: "12570", y: 86, tone: "lime" },
          { text: "12555", y: 249, tone: "gold" },
          { text: "12519", y: 641, tone: "maroon" },
          { text: "12520", y: 630, tone: "black" },
        ]}
        remaining="00:00:28" remainingPad="pr-[23px]"
        cciZero={934.5} cciUnit={0.63} cci={YM_CCI} fast={YM_FAST}
        cciTicks={[150, 100, 50, 0, -50, -100, -150]} cciGrid={[150, -150]}
        cciTags={[{ text: "-124,15", y: 1013, tone: "sky" }]} marker={666.5}
        volZero={1136.5} volUnit={0.125} vol={YM_VOL} volTicks={[600, 400, 200, 0]} volGrid={[600]}
        volTag={{ text: "79", y: 1126, tone: "red" }}
        times={[["07:15", 415], ["08:15", 521], ["09:15", 633]]}
        drawings={<DownArrow x={666.5} y={288.5} h={20} pink />}
      />
      <ChartWindow
        symbol="NQ" period="2 Min" frame="-mb-px flex-[574]" axis="w-[61px]" cciHeight="h-[235px]" volHeight="h-[97px]" extraTools fullCciTitle
        x0={778} x1={1284} top={46} sep1={814} sep2={1049} sep3={1146}
        firstBar={789.5} step={6} priceZero={331.5} priceStep={13.24} bars={NQ2_BARS}
        grid={[67.5, 199.5, 331.5, 464.5, 596.5, 728.5]}
        lines={[
          { pts: "787,384.5 1267,384.5", color: BROWN },
          { pts: "778,663 1284,663", color: GOLD, w: 2, dash: "6 1" },
          { pts: "778,768.5 1284,768.5", color: LIME, dash: "4 1" },
          { pts: "787,146.500 997.5,146.500 997.5,119.5 1021.5,119.5 1021.5,93.5 1033.5,93.5 1033.5,80.500 1267,80.500", color: OLIVE },
          { pts: "787,556.5 1231.5,556.5 1231.5,583.5 1237.5,583.5 1237.5,623.5 1261.5,623.5 1261.5,689.5 1268,689.5", color: MAROON },
          { pts: "789,325 807,321 837,315 876,308 915,303 936,300 969,293 999,287 1026,280 1053,272 1077,264 1113,260 1143,256 1161,258 1180,264 1210,274 1221,277 1245,288 1264,299", color: TEAL },
          { pts: "789,264 796,262 807,249 820,239 837,228 861,216 885,212 909,207 921,212 929,218 945,208 961,196 978,191 993,183 1005,171 1020,162 1035,145 1047,132 1065,126 1077,116 1101,135 1113,142 1131,145 1143,164 1155,202 1170,247 1180,294 1185,320 1197,353 1204,365 1215,377 1234,424 1251,471 1257,483 1264,503", color: KHAKI },
          { pts: "789,278 796,277 807,268 820,259 843,248 873,235 897,230 909,225 929,227 945,221 963,212 981,206 999,198 1026,181 1047,163 1065,155 1077,146 1089,146 1113,152 1131,152 1143,163 1155,183 1170,212 1185,253 1204,287 1218,309 1234,344 1248,372 1264,406", color: YELLOW },
          { pts: "1095,79.5 1284,79.5", color: BLUE },
          { pts: "1095,555.5 1284,555.5", color: BLUE },
          { pts: "1227,766.5 1264,766.5", color: BLUE },
        ]}
        priceTicks={[["2562,50", 199.5], ["2560,00", 331.5], ["2557,50", 464.5], ["2555,00", 596.5], ["2552,50", 728.5]]}
        priceTags={[
          { text: "2564,75", y: 80, tone: "lime" },
          { text: "2559,00", y: 384, tone: "gold" },
          { text: "2553,75", y: 662, tone: "black" },
          { text: "2553,25", y: 689, tone: "maroon" },
        ]}
        remaining="00:00:27" remainingPad="pr-[23px]"
        cciZero={932.5} cciUnit={0.557} cci={NQ2_CCI} fast={NQ2_FAST}
        cciTicks={[200, 150, 100, 50, 0, -50, -100, -200]} cciGrid={[-50, -200]}
        cciTags={[
          { text: "-151,25", y: 1016, tone: "yellow" },
          { text: "-142,33", y: 1011, tone: "sky" },
        ]}
        marker={1209.5}
        volZero={1140.5} volUnit={0.108} vol={NQ2_VOL} volTicks={[500, 0]}
        volTag={{ text: "93", y: 1130, tone: "red" }}
        times={[["07:15", 825], ["07:45", 897], ["08:15", 987], ["08:45", 1077], ["09:15", 1161], ["09:45", 1251]]}
        drawings={
          <g shapeRendering="auto">
            <circle cx="1029.500" cy="418.500" r="4" fill="#0000ff" stroke="#f0e68c" />
            <circle cx="1065.500" cy="439.500" r="4" fill="#0000ff" stroke="#f0e68c" />
            <circle cx="1041.500" cy="463.500" r="4" fill="#0000ff" stroke="#f0e68c" />
            <path d="M1155.500 570.500l5 5-5 5-5-5z" fill="#ff00ff" stroke="#f0e68c" />
            <DownArrow x={1209.5} y={390.5} h={15} />
            <path d="M1215 446v10l-6-5z" fill="#0000ff" />
            <path d="M1204 498v10l6-5z" fill="#ffa500" />
            <UpArrow x={1209.5} y={509} />
          </g>
        }
      />
      <ChartWindow
        symbol="NQ" period="1 Min" active frame="-mt-[2px] mb-px flex-[572]" axis="w-[60px]" cciHeight="h-[239px]" volHeight="h-[97px]" extraTools fullCciTitle
        x0={1351} x1={1856} top={44} sep1={808} sep2={1047} sep3={1144}
        firstBar={1362.5} step={6} priceZero={326.5} priceStep={13.43} bars={NQ1_BARS}
        grid={[57.5, 192.5, 326.5, 461.5, 596.5, 730.5]}
        lines={[
          { pts: "1360,380.5 1840,380.5", color: BROWN },
          { pts: "1351,664 1856,664", color: GOLD, w: 2, dash: "6 1" },
          { pts: "1351,771.5 1856,771.5", color: LIME, dash: "4 1" },
          { pts: "1360,111.5 1366.5,111.5 1366.5,84.5 1384.5,84.5 1384.5,71.5 1840,71.5", color: OLIVE },
          { pts: "1360,555.5 1768.5,555.5 1768.5,582.5 1780.5,582.5 1780.5,623.5 1834.5,623.5 1834.5,690.5 1841,690.5", color: MAROON },
          { pts: "1362,245 1392,238 1419,231 1437,228 1473,219 1506,215 1539,211 1560,210 1572,209 1602,210 1632,215 1665,226 1686,237 1716,249 1758,262 1776,269 1806,284 1836,301", color: TEAL },
          { pts: "1362,306 1386,303 1410,299 1437,295 1476,290 1512,288 1560,284 1597,281 1620,282 1644,283 1686,289 1734,293 1770,297 1806,304 1836,311", color: "#367474" },
          { pts: "1362,164 1374,157 1398,140 1416,130 1434,125 1455,120 1470,112 1482,112 1506,122 1530,130 1560,136 1572,136 1584,148 1602,158 1614,173 1632,204 1644,225 1656,253 1671,284 1683,309 1695,327 1722,358 1746,376 1761,390 1776,414 1800,450 1824,479 1836,497", color: KHAKI },
          { pts: "1506,70.5 1856,70.5", color: BLUE },
          { pts: "1506,554.5 1856,554.5", color: BLUE },
          { pts: "1765,768.5 1837,768.5", color: BLUE },
        ]}
        priceTicks={[["2562,50", 192.5], ["2560,00", 326.5], ["2557,50", 461.5], ["2555,00", 596.5], ["2552,50", 730.5]]}
        priceTags={[
          { text: "2564,75", y: 71, tone: "lime" },
          { text: "2559,00", y: 380, tone: "gold" },
          { text: "2553,75", y: 663, tone: "black" },
          { text: "2553,25", y: 690, tone: "maroon" },
        ]}
        remaining="00:00:27" remainingPad="pr-[23px]"
        cciZero={928.5} cciUnit={0.571} cci={NQ1_CCI} fast={NQ1_FAST}
        cciTicks={[200, 150, 100, 50, 0, -50, -100, -150]} cciGrid={[150, -150]}
        cciTags={[
          { text: "-129,48", y: 1002, tone: "yellow" },
          { text: "-162,7", y: 1021, tone: "sky" },
        ]}
        marker={1722.5}
        volZero={1138.5} volUnit={0.168} vol={NQ1_VOL} volTicks={[400, 200, 0]}
        volTag={{ text: "80", y: 1125, tone: "red" }}
        times={[["08:30", 1385], ["08:45", 1469], ["09:00", 1544], ["09:15", 1631], ["09:30", 1721], ["09:45", 1811]]}
        drawings={
          <g shapeRendering="auto">
            <DownArrow x={1722.5} y={427.5} h={15} />
            <path d="M1734 444v10l-6-5z" fill="#0000ff" />
            <path d="M1717 497v10l6-5z" fill="#ffa500" />
            <UpArrow x={1728.5} y={507} />
            <g fill="#ff00ff" textAnchor="middle" className="text-[12px]">
              <text x="1578" y="598">10v</text>
              <text x="1578" y="625">odraz od Open</text>
              <text x="1578" y="653">sl 4</text>
            </g>
          </g>
        }
      />
    </main>
  );
}
